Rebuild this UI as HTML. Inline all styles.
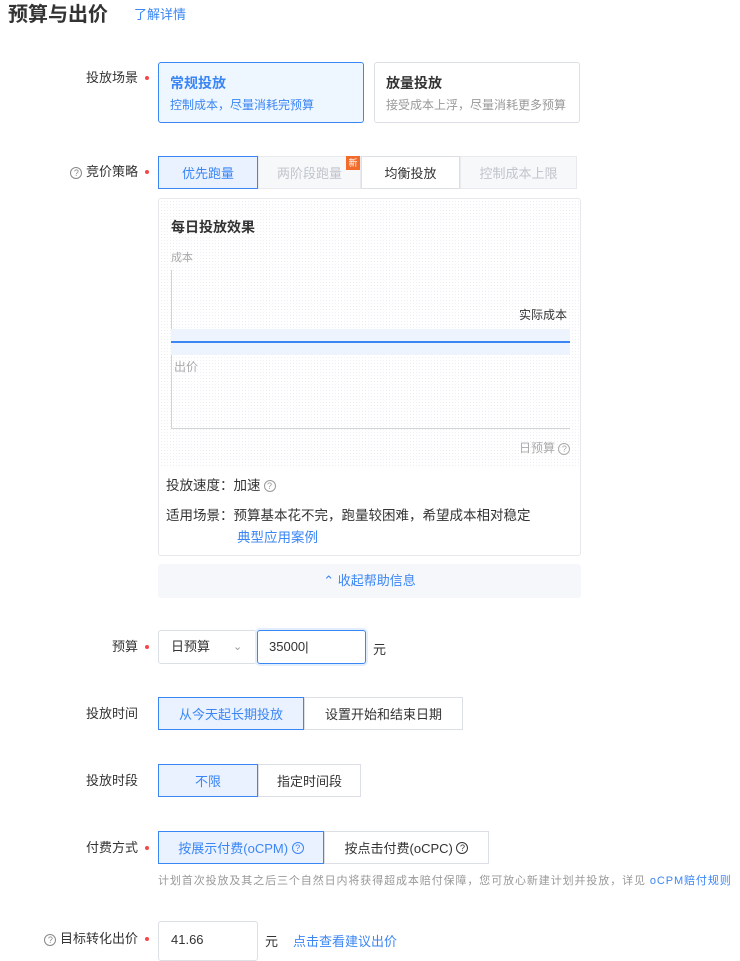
<!DOCTYPE html>
<html><head><meta charset="utf-8"><style>
*{box-sizing:border-box;margin:0;padding:0}
body{width:740px;height:949px;background:#fff;font-family:"Liberation Sans","Noto Sans CJK SC",sans-serif;color:#333;position:relative;overflow:hidden;font-size:13px}
.a{position:absolute}
.cjk{font-family:"Noto Sans CJK SC","Liberation Sans",sans-serif}
.lbl{position:absolute;right:602px;font-size:13px;color:#333;white-space:nowrap;line-height:16px}
.dot{position:absolute;left:145px;width:4px;height:4px;border-radius:50%;background:#f5484a}
.seg{position:absolute;height:33px;border:1px solid #dcdfe6;background:#fff;display:flex;align-items:center;justify-content:center;font-size:13px;color:#333;white-space:nowrap}
.on{background:#e9f2fe;border-color:#3b86f5;color:#3b86f5;z-index:2}
.dis{background:#f7f8fa;color:#c0c4cc;border-color:#e8eaee}
.q{display:inline-block;width:12px;height:12px;border:1px solid currentColor;border-radius:50%;font-size:9px;line-height:10px;text-align:center;vertical-align:middle;font-family:"Liberation Sans",sans-serif}
.blue{color:#3b86f5}
</style></head><body>
<div class="a" style="left:8px;top:1px;font-size:20px;font-weight:bold;color:#333;line-height:28px">预算与出价</div>
<div class="a blue" style="left:134px;top:6px;font-size:13px;line-height:18px">了解详情</div>

<div class="lbl" style="top:70px">投放场景</div><div class="dot" style="top:76px"></div>
<div class="a" style="left:158px;top:62px;width:206px;height:61px;border:1px solid #3b86f5;border-radius:3px;background:#eef6ff"></div>
<div class="a blue" style="left:170px;top:73px;font-size:14px;font-weight:bold">常规投放</div>
<div class="a blue" style="left:170px;top:96px;font-size:12px">控制成本，尽量消耗完预算</div>
<div class="a" style="left:374px;top:62px;width:206px;height:61px;border:1px solid #dcdfe6;border-radius:3px"></div>
<div class="a" style="left:386px;top:73px;font-size:14px;font-weight:bold;color:#333">放量投放</div>
<div class="a" style="left:386px;top:96px;font-size:12px;color:#999">接受成本上浮，尽量消耗更多预算</div>

<div class="lbl" style="top:164px;color:#333"><span class="q" style="color:#888">?</span> 竞价策略</div><div class="dot" style="top:170px"></div>
<div class="seg on" style="left:158px;top:156px;width:100px">优先跑量</div>
<div class="seg dis" style="left:258px;top:156px;width:103px">两阶段跑量</div>
<div class="a" style="left:346px;top:156px;width:14px;height:14px;background:#f26b2a;color:#fff;font-size:9px;line-height:14px;text-align:center;z-index:3">新</div>
<div class="seg" style="left:361px;top:156px;width:99px">均衡投放</div>
<div class="seg dis" style="left:460px;top:156px;width:117px">控制成本上限</div>

<div class="a" style="left:158px;top:198px;width:423px;height:358px;border:1px solid #e6e8eb;border-radius:3px;background:#fff"></div>
<div class="a" style="left:160px;top:200px;width:419px;height:268px;background-image:radial-gradient(#eceef2 0.6px,transparent 0.7px);background-size:3px 3px"></div>
<div class="a" style="left:171px;top:217px;font-size:14px;font-weight:bold;color:#333">每日投放效果</div>
<div class="a" style="left:171px;top:249px;font-size:11px;color:#aaa">成本</div>
<div class="a" style="left:171px;top:270px;width:1px;height:158px;background:#d0d3d8"></div>
<div class="a" style="left:171px;top:428px;width:399px;height:1px;background:#d0d3d8"></div>
<div class="a" style="left:171px;top:329px;width:399px;height:26px;background:#eef4fd"></div>
<div class="a" style="left:171px;top:341px;width:399px;height:2px;background:#3b86f5"></div>
<div class="a" style="left:519px;top:306px;font-size:12px;color:#333">实际成本</div>
<div class="a" style="left:174px;top:358px;font-size:12px;color:#aaa">出价</div>
<div class="a" style="left:519px;top:439px;font-size:12px;color:#aaa">日预算 <span class="q" style="color:#aaa">?</span></div>
<div class="a cjk" style="left:166px;top:475px;font-size:13.5px;color:#333;line-height:18px">投放速度：加速 <span class="q" style="color:#999">?</span></div>
<div class="a cjk" style="left:166px;top:505px;font-size:13.5px;color:#333;line-height:18px;white-space:nowrap">适用场景：预算基本花不完，跑量较困难，希望成本相对稳定</div>
<div class="a blue cjk" style="left:237px;top:527px;font-size:13.5px;line-height:18px">典型应用案例</div>
<div class="a blue" style="left:158px;top:564px;width:423px;height:34px;background:#f5f7fa;border-radius:3px;text-align:center;line-height:34px;font-size:13px">⌃ 收起帮助信息</div>

<div class="lbl" style="top:639px">预算</div><div class="dot" style="top:645px"></div>
<div class="a" style="left:158px;top:630px;width:99px;height:34px;border:1px solid #dcdfe6;border-radius:3px;padding-left:12px;line-height:32px">日预算<span style="position:absolute;left:74px;color:#999;font-size:11px">⌄</span></div>
<div class="a" style="left:257px;top:630px;width:109px;height:34px;border:1px solid #3b86f5;border-radius:3px;padding-left:11px;line-height:32px;box-shadow:0 0 0 2px #e3eefd">35000|</div>
<div class="a" style="left:373px;top:639px">元</div>

<div class="lbl" style="top:706px">投放时间</div>
<div class="seg on" style="left:158px;top:697px;width:146px">从今天起长期投放</div>
<div class="seg" style="left:304px;top:697px;width:159px">设置开始和结束日期</div>

<div class="lbl" style="top:773px">投放时段</div>
<div class="seg on" style="left:158px;top:764px;width:100px">不限</div>
<div class="seg" style="left:258px;top:764px;width:103px">指定时间段</div>

<div class="lbl" style="top:840px">付费方式</div><div class="dot" style="top:846px"></div>
<div class="seg on" style="left:158px;top:831px;width:166px">按展示付费(oCPM)&nbsp;<span class="q">?</span></div>
<div class="seg" style="left:324px;top:831px;width:165px">按点击付费(oCPC)&nbsp;<span class="q">?</span></div>
<div class="a" style="left:158px;top:872px;font-size:11px;color:#999;white-space:nowrap;letter-spacing:0.9px">计划首次投放及其之后三个自然日内将获得超成本赔付保障，您可放心新建计划并投放，详见 <span class="blue">oCPM赔付规则</span></div>

<div class="lbl" style="top:931px"><span class="q" style="color:#888">?</span> 目标转化出价</div><div class="dot" style="top:937px"></div>
<div class="a" style="left:158px;top:921px;width:100px;height:40px;border:1px solid #dcdfe6;border-radius:3px;padding-left:12px;line-height:36px">41.66</div>
<div class="a" style="left:265px;top:931px">元</div>
<div class="a blue" style="left:293px;top:931px">点击查看建议出价</div>
</body></html>
